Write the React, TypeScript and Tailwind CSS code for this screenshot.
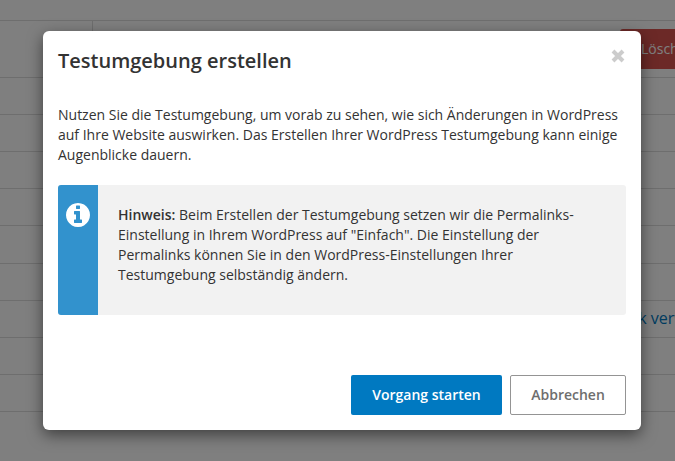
import React from 'react';

const rows = [
  { h: 'h-[37px]', text: '' },
  { h: 'h-[37px]', text: '' },
  { h: 'h-[37px]', text: '' },
  { h: 'h-[37px]', text: '' },
  { h: 'h-[38px]', text: '' },
  { h: 'h-[37px]', text: '' },
  { h: 'h-[37px]', text: 'Link verwalten' },
  { h: 'h-[37px]', text: '' },
  { h: 'h-[37px]', text: '' },
];

export default function App() {
  return (
    <div className="relative h-[461px] w-[675px] overflow-hidden bg-white font-['Open_Sans',sans-serif] text-sm text-[#333]">
      {/* Page behind the dialog */}
      <div className="h-[21px] border-b border-[#ddd]" />
      <div className="flex h-[57px] border-b border-[#ddd]">
        <div className="w-[93px] border-r border-[#ddd]" />
        <div className="flex flex-1 items-start justify-end pt-[8px]">
          <div className="flex h-[40px] w-[55px] items-center overflow-hidden whitespace-nowrap rounded-l-[3px] bg-[#d9534f] pl-[21px] text-white">
            Löschen
          </div>
        </div>
      </div>
      {rows.map((row, i) => (
        <div key={i} className={`${row.h} flex items-center overflow-hidden whitespace-nowrap border-b border-[#ddd] pb-[2px] pl-[616px] text-base text-[#0079c1]`}>
          {row.text}
        </div>
      ))}

      {/* Backdrop */}
      <div className="absolute inset-0 bg-black/50 pl-[43px] pt-[31px]">
        {/* Dialog */}
        <div className="relative flex h-[399px] w-[598px] flex-col rounded-[6px] bg-white px-[15px] shadow-[0_5px_15px_rgba(0,0,0,0.5)]">
          <h2 className="mt-[15px] text-[20px] font-semibold leading-[30px] text-[#333]">Testumgebung erstellen</h2>
          <button className="absolute right-[16px] top-[18px] text-[#ccc]">
            <svg viewBox="0 0 14 14" className="h-[14px] w-[14px]">
              <path d="M2 2 L12 12 M12 2 L2 12" stroke="currentColor" strokeWidth="4" />
            </svg>
          </button>

          <p className="mt-[29px] w-[568px] leading-[20px] text-[#333]">
            Nutzen Sie die Testumgebung, um vorab zu sehen, wie sich Änderungen in WordPress auf Ihre Website auswirken. Das Erstellen Ihrer WordPress Testumgebung kann einige Augenblicke dauern.
          </p>

          <div className="mt-[20px] flex h-[130px] w-[568px] overflow-hidden rounded-[3px] bg-[#f2f2f2]">
            <div className="flex w-[40px] shrink-0 justify-center bg-[#3292cd] pt-[18px]">
              <svg viewBox="128 128 1536 1536" className="h-[24px] w-[24px] text-white">
                <path
                  fill="currentColor"
                  d="M1152 1376v-160q0-14-9-23t-23-9h-96v-512q0-14-9-23t-23-9h-320q-14 0-23 9t-9 23v160q0 14 9 23t23 9h96v320h-96q-14 0-23 9t-9 23v160q0 14 9 23t23 9h448q14 0 23-9t9-23zm-128-896v-160q0-14-9-23t-23-9h-192q-14 0-23 9t-9 23v160q0 14 9 23t23 9h192q14 0 23-9t9-23zm640 416q0 209-103 385.5t-279.5 279.5-385.5 103-385.5-103-279.5-279.5-103-385.5 103-385.5 279.5-279.5 385.5-103 385.5 103 279.5 279.5 103 385.5z"
                />
              </svg>
            </div>
            <p className="w-[490px] pl-[20px] pt-[20px] leading-[20px]">
              <strong className="font-semibold">Hinweis:</strong> Beim Erstellen der Testumgebung setzen wir die Permalinks-Einstellung in Ihrem WordPress auf "Einfach". Die Einstellung der Permalinks können Sie in den WordPress-Einstellungen Ihrer Testumgebung selbständig ändern.
            </p>
          </div>

          <div className="mt-[60px] flex w-[568px] justify-end gap-[8px]">
            <button className="h-[40px] w-[151px] rounded-[2px] bg-[#0079c1] font-semibold text-white">Vorgang starten</button>
            <button className="h-[40px] w-[116px] rounded-[2px] border border-[#949494] bg-white font-semibold text-[#6e6e6e]">Abbrechen</button>
          </div>
        </div>
      </div>
    </div>
  );
}
